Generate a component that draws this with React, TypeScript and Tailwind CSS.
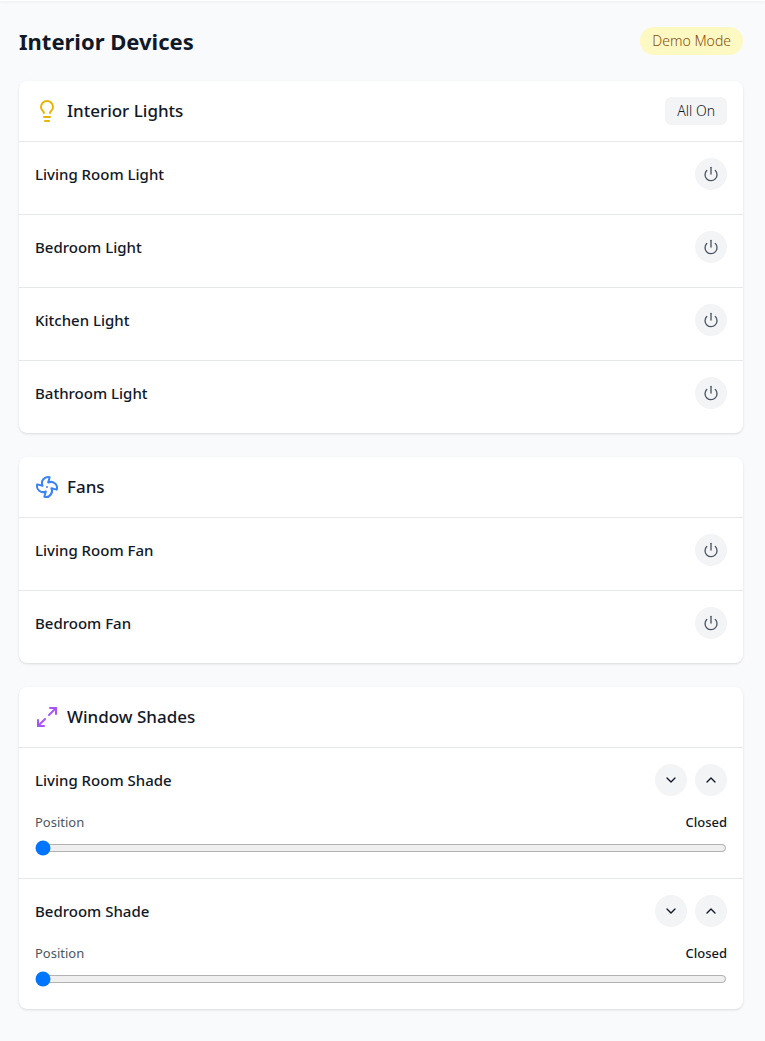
import { useState } from "react";
import type { ReactNode } from "react";
import { ChevronDown, ChevronUp, Fan, Lightbulb, Maximize2, Power } from "lucide-react";

const lights = ["Living Room Light", "Bedroom Light", "Kitchen Light", "Bathroom Light"];
const fans = ["Living Room Fan", "Bedroom Fan"];
const shades = ["Living Room Shade", "Bedroom Shade"];

function Card({ icon, title, action, children }: { icon: ReactNode; title: string; action?: ReactNode; children: ReactNode }) {
  return (
    <section className="overflow-hidden rounded-lg bg-white shadow-sm">
      <header className="flex h-15 items-center justify-between px-4">
        <div className="flex items-center gap-2">
          {icon}
          <h2 className="text-[17px] leading-7 font-medium">{title}</h2>
        </div>
        {action}
      </header>
      <ul>{children}</ul>
    </section>
  );
}

function PowerRow({ name, on, onToggle }: { name: string; on: boolean; onToggle: () => void }) {
  return (
    <li className="border-t border-[#e5e7eb] px-4 pt-4 pb-6">
      <div className="flex items-center justify-between">
        <h3 className="text-[15px] leading-6 font-medium">{name}</h3>
        <button type="button" aria-label={name} aria-pressed={on} onClick={onToggle} className="flex size-8 items-center justify-center rounded-full bg-[#f3f4f6] text-[#4b5563] hover:bg-gray-200">
          <Power size={16} />
        </button>
      </div>
    </li>
  );
}

function ShadeRow({ name }: { name: string }) {
  const [position, setPosition] = useState(0);
  const id = name.toLowerCase().replaceAll(" ", "-");
  return (
    <li className="border-t border-[#e5e7eb] px-4 pt-4 pb-[22px]">
      <div className="flex items-center justify-between">
        <h3 className="text-[15px] leading-6 font-medium">{name}</h3>
        <div className="flex gap-2">
          <button type="button" aria-label={"Close " + name} onClick={() => setPosition(0)} className="flex size-8 items-center justify-center rounded-full bg-[#f3f4f6] hover:bg-gray-200">
            <ChevronDown size={16} />
          </button>
          <button type="button" aria-label={"Open " + name} onClick={() => setPosition(100)} className="flex size-8 items-center justify-center rounded-full bg-[#f3f4f6] hover:bg-gray-200">
            <ChevronUp size={16} />
          </button>
        </div>
      </div>
      <div className="mt-4 flex items-center justify-between text-[13px] leading-5">
        <label htmlFor={id} className="text-[#4b5563]">Position</label>
        <span className="font-medium">{position === 0 ? "Closed" : position === 100 ? "Open" : position + "%"}</span>
      </div>
      <input id={id} type="range" min={0} max={100} value={position} onChange={(e) => setPosition(Number(e.target.value))} className="mt-2 block h-4 w-full" />
    </li>
  );
}

export default function App() {
  const [active, setActive] = useState<string[]>([]);
  const toggle = (name: string) =>
    setActive((now) => (now.includes(name) ? now.filter((n) => n !== name) : [...now, name]));

  return (
    <div className="min-h-screen bg-[#f9fafb] font-['Noto_Sans',sans-serif] text-[#111827]">
      <div className="h-px bg-white shadow-sm" />
      <main className="pr-[22px] pb-8 pl-[19px]">
        <div className="flex items-center justify-between py-6">
          <h1 className="text-[22px] leading-8 font-bold">Interior Devices</h1>
          <span className="rounded-full bg-[#fef9c3] px-3 py-1 text-sm font-light text-[#854d0e]">Demo Mode</span>
        </div>
        <div className="space-y-6">
          <Card
            icon={<Lightbulb size={24} className="text-[#eab308]" />}
            title="Interior Lights"
            action={
              <button type="button" onClick={() => setActive((now) => [...new Set([...now, ...lights])])} className="rounded-md bg-[#f3f4f6] px-3 py-1 text-sm font-light hover:bg-gray-200">
                All On
              </button>
            }
          >
            {lights.map((n) => <PowerRow key={n} name={n} on={active.includes(n)} onToggle={() => toggle(n)} />)}
          </Card>
          <Card icon={<Fan size={24} className="text-[#3b82f6]" />} title="Fans">
            {fans.map((n) => <PowerRow key={n} name={n} on={active.includes(n)} onToggle={() => toggle(n)} />)}
          </Card>
          <Card icon={<Maximize2 size={24} className="text-[#a855f7]" />} title="Window Shades">
            {shades.map((n) => <ShadeRow key={n} name={n} />)}
          </Card>
        </div>
      </main>
    </div>
  );
}
